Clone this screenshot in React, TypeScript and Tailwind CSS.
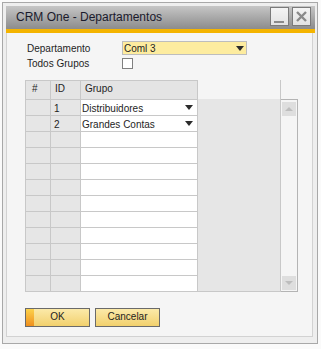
import React from "react";

function Caret({ className = "" }: { className?: string }) {
  return (
    <svg width="8" height="5" viewBox="0 0 8 5" className={className}>
      <polygon points="0,0 8,0 4,5" fill="#2b2b2b" />
    </svg>
  );
}

export default function App() {
  const rows = Array.from({ length: 12 }, (_, i) => i);
  const data: { id: string; g: string }[] = [
    { id: "1", g: "Distribuidores" },
    { id: "2", g: "Grandes Contas" },
  ];
  return (
    <div className="w-[321px] h-[349px] bg-[#fafafa] pl-[2px] pt-[2px] font-['Liberation_Sans',Arial,sans-serif] text-[10px] text-[#1e1e1e]">
      <div className="w-[316px] h-[342px] border border-[#a8a8a8] bg-[#eeeeee] pl-[3px] pt-[3px] flex flex-col">
        {/* Title bar */}
        <div className="w-[309px] h-[23px] flex items-start justify-between pl-[10px] pr-[4px] bg-linear-to-b from-[#c6c6c6] to-[#8c8c8c]">
          <span className="text-[12px] leading-[23px] text-[#1a1a2c]">CRM One - Departamentos</span>
          <div className="flex gap-[3px] mt-[1px]">
            <div className="w-[19px] h-[19px] border border-[#7a7a7a] bg-linear-to-b from-[#f4f4f4] to-[#e2e2e2]">
              <svg width="17" height="17" viewBox="0 0 17 17">
                <rect x="3" y="13" width="10" height="2" fill="#8a8a8a" />
              </svg>
            </div>
            <div className="w-[19px] h-[19px] border border-[#7a7a7a] bg-linear-to-b from-[#f4f4f4] to-[#e2e2e2]">
              <svg width="17" height="17" viewBox="0 0 17 17">
                <path d="M4 4 L13 13 M13 4 L4 13" stroke="#8a8a8a" strokeWidth="2.4" />
              </svg>
            </div>
          </div>
        </div>
        <div className="w-[309px] h-[4px] bg-[#f4b400]" />
        {/* Content */}
        <div className="w-[307px] h-[304px] border-l border-r border-b border-[#d2d2d2] bg-[#f5f5f5] pl-[18px] pt-[8px] flex flex-col">
          <div className="flex h-[14px]">
            <div className="w-[97px] pl-[2px] leading-[14px] pt-[1px]">Departamento</div>
            <div className="w-[125px] h-[14px] border border-[#bdbdbd] bg-[#fdec9f] flex items-center justify-between pl-[1px] pr-[2px]">
              <span className="leading-[12px] pt-[1px]">Coml 3</span>
              <Caret />
            </div>
          </div>
          <div className="flex h-[11px] mt-[3px]">
            <div className="w-[97px] pl-[2px] leading-[11px]">Todos Grupos</div>
            <div className="w-[11px] h-[11px] border border-[#808080] bg-white" />
          </div>
          {/* Table */}
          <div className="flex mt-[11px] h-[212px]">
            <div className="grid grid-cols-[25px_30px_117px] border-l border-t border-[#c8c8c8] self-start">
              <div className="h-[19px] border-r border-b border-[#c8c8c8] bg-[#e4e4e4] pl-[6px] leading-[15px]">#</div>
              <div className="h-[19px] border-r border-b border-[#c8c8c8] bg-[#e4e4e4] pl-[4px] leading-[15px]">ID</div>
              <div className="h-[19px] border-r border-b border-[#c8c8c8] bg-[#e4e4e4] pl-[4px] leading-[15px]">Grupo</div>
              {rows.map((i) => (
                <React.Fragment key={i}>
                  <div className="h-[16px] border-r border-b border-[#c8c8c8] bg-[#e6e6e6]" />
                  <div className="h-[16px] border-r border-b border-[#c8c8c8] bg-[#e6e6e6] pl-[3px] pt-[2px] leading-[13px]">
                    {data[i]?.id ?? ""}
                  </div>
                  <div className="h-[16px] border-r border-b border-[#c8c8c8] bg-white pl-[1px] pr-[4px] pt-[2px] leading-[13px] flex items-start justify-between">
                    <span>{data[i]?.g ?? ""}</span>
                    {data[i] ? <Caret className="mt-[3px]" /> : null}
                  </div>
                </React.Fragment>
              ))}
            </div>
            <div className="w-[83px] h-[212px] border-r border-[#c8c8c8] flex flex-col">
              <div className="h-[19px]" />
              <div className="flex-1 bg-[#e6e6e6] border-b border-[#c8c8c8]" />
            </div>
            <div className="w-[17px] h-[212px] flex flex-col">
              <div className="h-[19px]" />
              <div className="flex-1 border-t border-r border-b border-[#b4b4b4] bg-[#f5f5f5] flex flex-col justify-between pl-[1px] pt-[2px] pb-[1px]">
                <div className="w-[14px] h-[14px] bg-[#dedede] flex items-center justify-center">
                  <svg width="8" height="4" viewBox="0 0 8 4">
                    <polygon points="0,4 8,4 4,0" fill="#bdbdbd" />
                  </svg>
                </div>
                <div className="w-[14px] h-[14px] bg-[#dedede] flex items-center justify-center">
                  <svg width="8" height="4" viewBox="0 0 8 4">
                    <polygon points="0,0 8,0 4,4" fill="#bdbdbd" />
                  </svg>
                </div>
              </div>
            </div>
          </div>
          {/* Buttons */}
          <div className="flex gap-[5px] mt-[16px]">
            <div className="relative w-[65px] h-[19px] border border-[#6a6a6a] bg-linear-to-b from-[#fbeaa9] to-[#f2d06c] text-center leading-[15px]">
              <div className="absolute left-0 top-0 bottom-0 w-[8px] bg-linear-to-b from-[#fbd24a] to-[#ef8f1c]" />
              <span className="relative">OK</span>
            </div>
            <div className="w-[65px] h-[19px] border border-[#6a6a6a] bg-linear-to-b from-[#fbeaa9] to-[#f2d06c] text-center leading-[15px]">
              Cancelar
            </div>
          </div>
        </div>
      </div>
    </div>
  );
}
